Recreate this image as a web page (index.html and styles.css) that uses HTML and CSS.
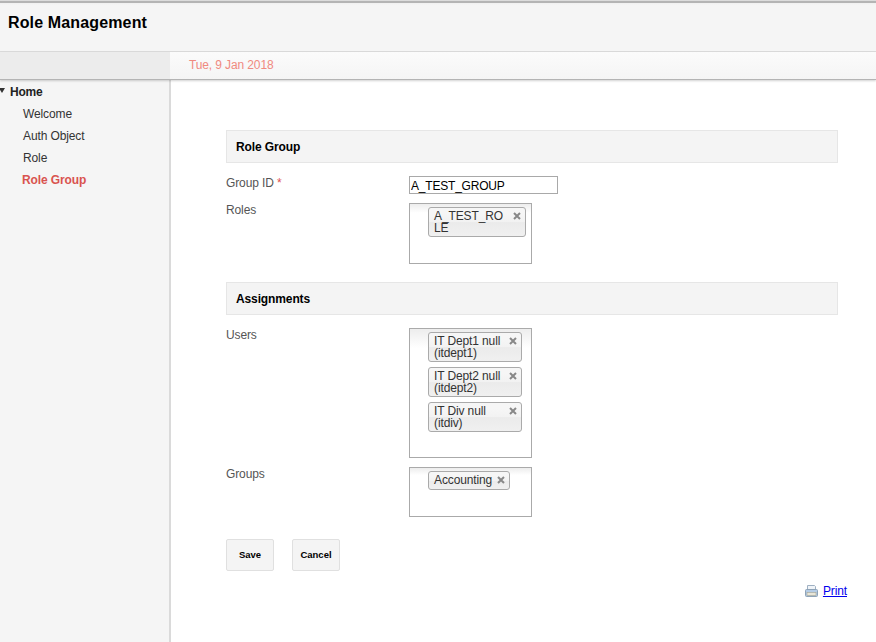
FILE: index.html
```html
<!DOCTYPE html>
<html lang="en">
<head>
  <meta charset="UTF-8">
  <meta name="viewport" content="width=device-width, initial-scale=1.0">
  <title>Role Management</title>
  <link rel="stylesheet" href="styles.css">
</head>
<body>
  <!-- Header -->
  <header class="top">
    <h1>Role Management</h1>
  </header>

  <div class="date-bar">
    <div class="date-spacer"></div>
    <div class="date">Tue, 9 Jan 2018</div>
  </div>

  <div class="page">
    <!-- Side menu -->
    <nav class="side">
      <div class="home"><span class="arrow"></span>Home</div>
      <a href="#">Welcome</a>
      <a href="#">Auth Object</a>
      <a href="#">Role</a>
      <a href="#" class="active">Role Group</a>
    </nav>

    <!-- Form -->
    <main class="content">
      <h2 class="section">Role Group</h2>
      <div class="row row-id">
        <label>Group ID <span class="req">*</span></label>
        <input type="text" class="text-input" value="A_TEST_GROUP">
      </div>
      <div class="row">
        <label>Roles</label>
        <ul class="picker picker-roles">
          <li class="chip chip-wide">A_TEST_ROLE<svg class="close" viewBox="0 0 8 8"><path d="M1 1l6 6M7 1L1 7"/></svg></li>
        </ul>
      </div>

      <h2 class="section section-next">Assignments</h2>
      <div class="row row-users">
        <label>Users</label>
        <ul class="picker picker-users">
          <li class="chip chip-user">IT Dept1 null (itdept1)<svg class="close" viewBox="0 0 8 8"><path d="M1 1l6 6M7 1L1 7"/></svg></li>
          <li class="chip chip-user">IT Dept2 null (itdept2)<svg class="close" viewBox="0 0 8 8"><path d="M1 1l6 6M7 1L1 7"/></svg></li>
          <li class="chip chip-user">IT Div null (itdiv)<svg class="close" viewBox="0 0 8 8"><path d="M1 1l6 6M7 1L1 7"/></svg></li>
        </ul>
      </div>
      <div class="row">
        <label>Groups</label>
        <ul class="picker picker-groups">
          <li class="chip">Accounting<svg class="close" viewBox="0 0 8 8"><path d="M1 1l6 6M7 1L1 7"/></svg></li>
        </ul>
      </div>

      <div class="buttons">
        <button type="button">Save</button>
        <button type="button">Cancel</button>
      </div>

      <div class="print">
        <svg width="13" height="12" viewBox="0 0 13 12">
          <path d="M2.5 5V0.5h7l1 1V5" fill="#f0f4f8" stroke="#9fb0c2"/>
          <rect x="0.5" y="4.5" width="12" height="7" rx="1" fill="#b4cce6" stroke="#8ea3b8"/>
          <rect x="2" y="7.5" width="9" height="3" fill="#e9e6d8" stroke="#a3a394" stroke-width="0.6"/>
        </svg>
        <a href="#">Print</a>
      </div>
    </main>
  </div>
</body>
</html>
```

FILE: styles.css
```css
* {
  box-sizing: border-box;
}
html, body {
  height: 100%;
}
body {
  margin: 0;
  font-family: "Liberation Sans", Arial, sans-serif;
  font-size: 12px;
  letter-spacing: -0.12px;
  color: #333;
  background-color: #fff;
  display: flex;
  flex-direction: column;
  overflow: hidden;
}
.top {
  height: 52px;
  flex: none;
  background: linear-gradient(#dcdcdc 1px, #b4b4b4 1px, #b4b4b4 3px, #f0f0f0 3px, #f5f5f5 5px);
  border-bottom: 1px solid #dcdcdc;
  padding: 13px 8px 0;
}
.top h1 {
  margin: 0;
  font-size: 16px;
  line-height: 19px;
  letter-spacing: 0.14px;
  color: #000;
}
.date-bar {
  height: 28px;
  flex: none;
  display: flex;
  background: linear-gradient(#fbfbfb, #f5f5f5);
  border-bottom: 1px solid #b4b4b4;
  box-shadow: 0 1px 2px rgba(0, 0, 0, 0.18);
  position: relative;
}
.date-spacer {
  width: 170px;
  background-color: #ececec;
}
.date {
  padding: 6px 0 0 19px;
  color: #f08a80;
  line-height: 14px;
}
.page {
  flex: 1;
  display: flex;
}
.side {
  width: 171px;
  flex: none;
  background-color: #f5f5f5;
  border-right: 2px solid #dadada;
  padding-top: 5px;
  display: flex;
  flex-direction: column;
}
.side a {
  display: block;
  height: 22px;
  line-height: 22px;
  padding-left: 23px;
  color: #333;
  text-decoration: none;
}
.side a.active {
  padding-left: 22px;
  color: #d9534f;
  font-weight: bold;
}
.home {
  height: 14px;
  line-height: 14px;
  margin-bottom: 4px;
  padding-left: 10px;
  font-weight: bold;
  letter-spacing: -0.2px;
  color: #222;
  position: relative;
}
.arrow {
  position: absolute;
  left: -1px;
  top: 3px;
  border-left: 3px solid transparent;
  border-right: 3px solid transparent;
  border-top: 5px solid #333;
}
.content {
  flex: 1;
  padding: 50px 38px 0 55px;
}
.section {
  height: 33px;
  margin: 0 0 13px;
  padding-left: 9px;
  font-size: 12px;
  line-height: 32px;
  color: #000;
  background-color: #f4f4f4;
  border: 1px solid #e6e6e6;
}
.section-next {
  margin-top: 18px;
}
.row {
  display: grid;
  grid-template-columns: 183px 1fr;
  margin-top: 9px;
}
.row-id {
  margin-top: 0;
}
.row-users {
  margin-top: 0;
}
.row label {
  line-height: 14px;
  color: #555;
}
.req {
  color: #e05050;
}
.text-input {
  width: 149px;
  height: 18px;
  padding: 1px 1px 0;
  font-family: inherit;
  font-size: 12px;
  letter-spacing: -0.2px;
  color: #000;
  border: 1px solid #a9a9a9;
  border-radius: 0;
  outline: none;
}
.picker {
  width: 123px;
  margin: 0;
  padding: 3px 0 0 18px;
  list-style: none;
  border: 1px solid #aaa;
  background: linear-gradient(#eee 1%, #fff 15%);
}
.picker-roles {
  height: 61px;
}
.picker-users {
  height: 130px;
}
.picker-groups {
  height: 50px;
}
.chip {
  position: relative;
  width: fit-content;
  padding: 3px 17px 2px 5px;
  line-height: 11.5px;
  color: #333;
  word-break: break-all;
  border: 1px solid #aaa;
  border-radius: 3px;
  background: linear-gradient(#f6f6f6 20%, #f2f2f2 50%, #ebebeb 52%, #f0f0f0 100%);
}
.chip + .chip {
  margin-top: 5.2px;
}
.chip-wide {
  width: 98px;
}
.chip-user {
  width: 94px;
  word-break: normal;
}
.close {
  position: absolute;
  right: 4px;
  top: 4px;
  width: 8px;
  height: 8px;
  fill: none;
  stroke: #888;
  stroke-width: 2;
}
.buttons {
  display: flex;
  gap: 18px;
  margin-top: 22px;
}
.buttons button {
  width: 48px;
  height: 32px;
  padding: 0 0 1px;
  font-family: inherit;
  font-size: 9.5px;
  font-weight: bold;
  color: #000;
  background-color: #f4f4f4;
  border: 1px solid #e0e0e0;
  border-radius: 2px;
}
.print {
  display: flex;
  justify-content: flex-end;
  align-items: center;
  gap: 5px;
  margin-top: 13px;
  margin-right: -9px;
}
.print a {
  color: #00e;
}
```
